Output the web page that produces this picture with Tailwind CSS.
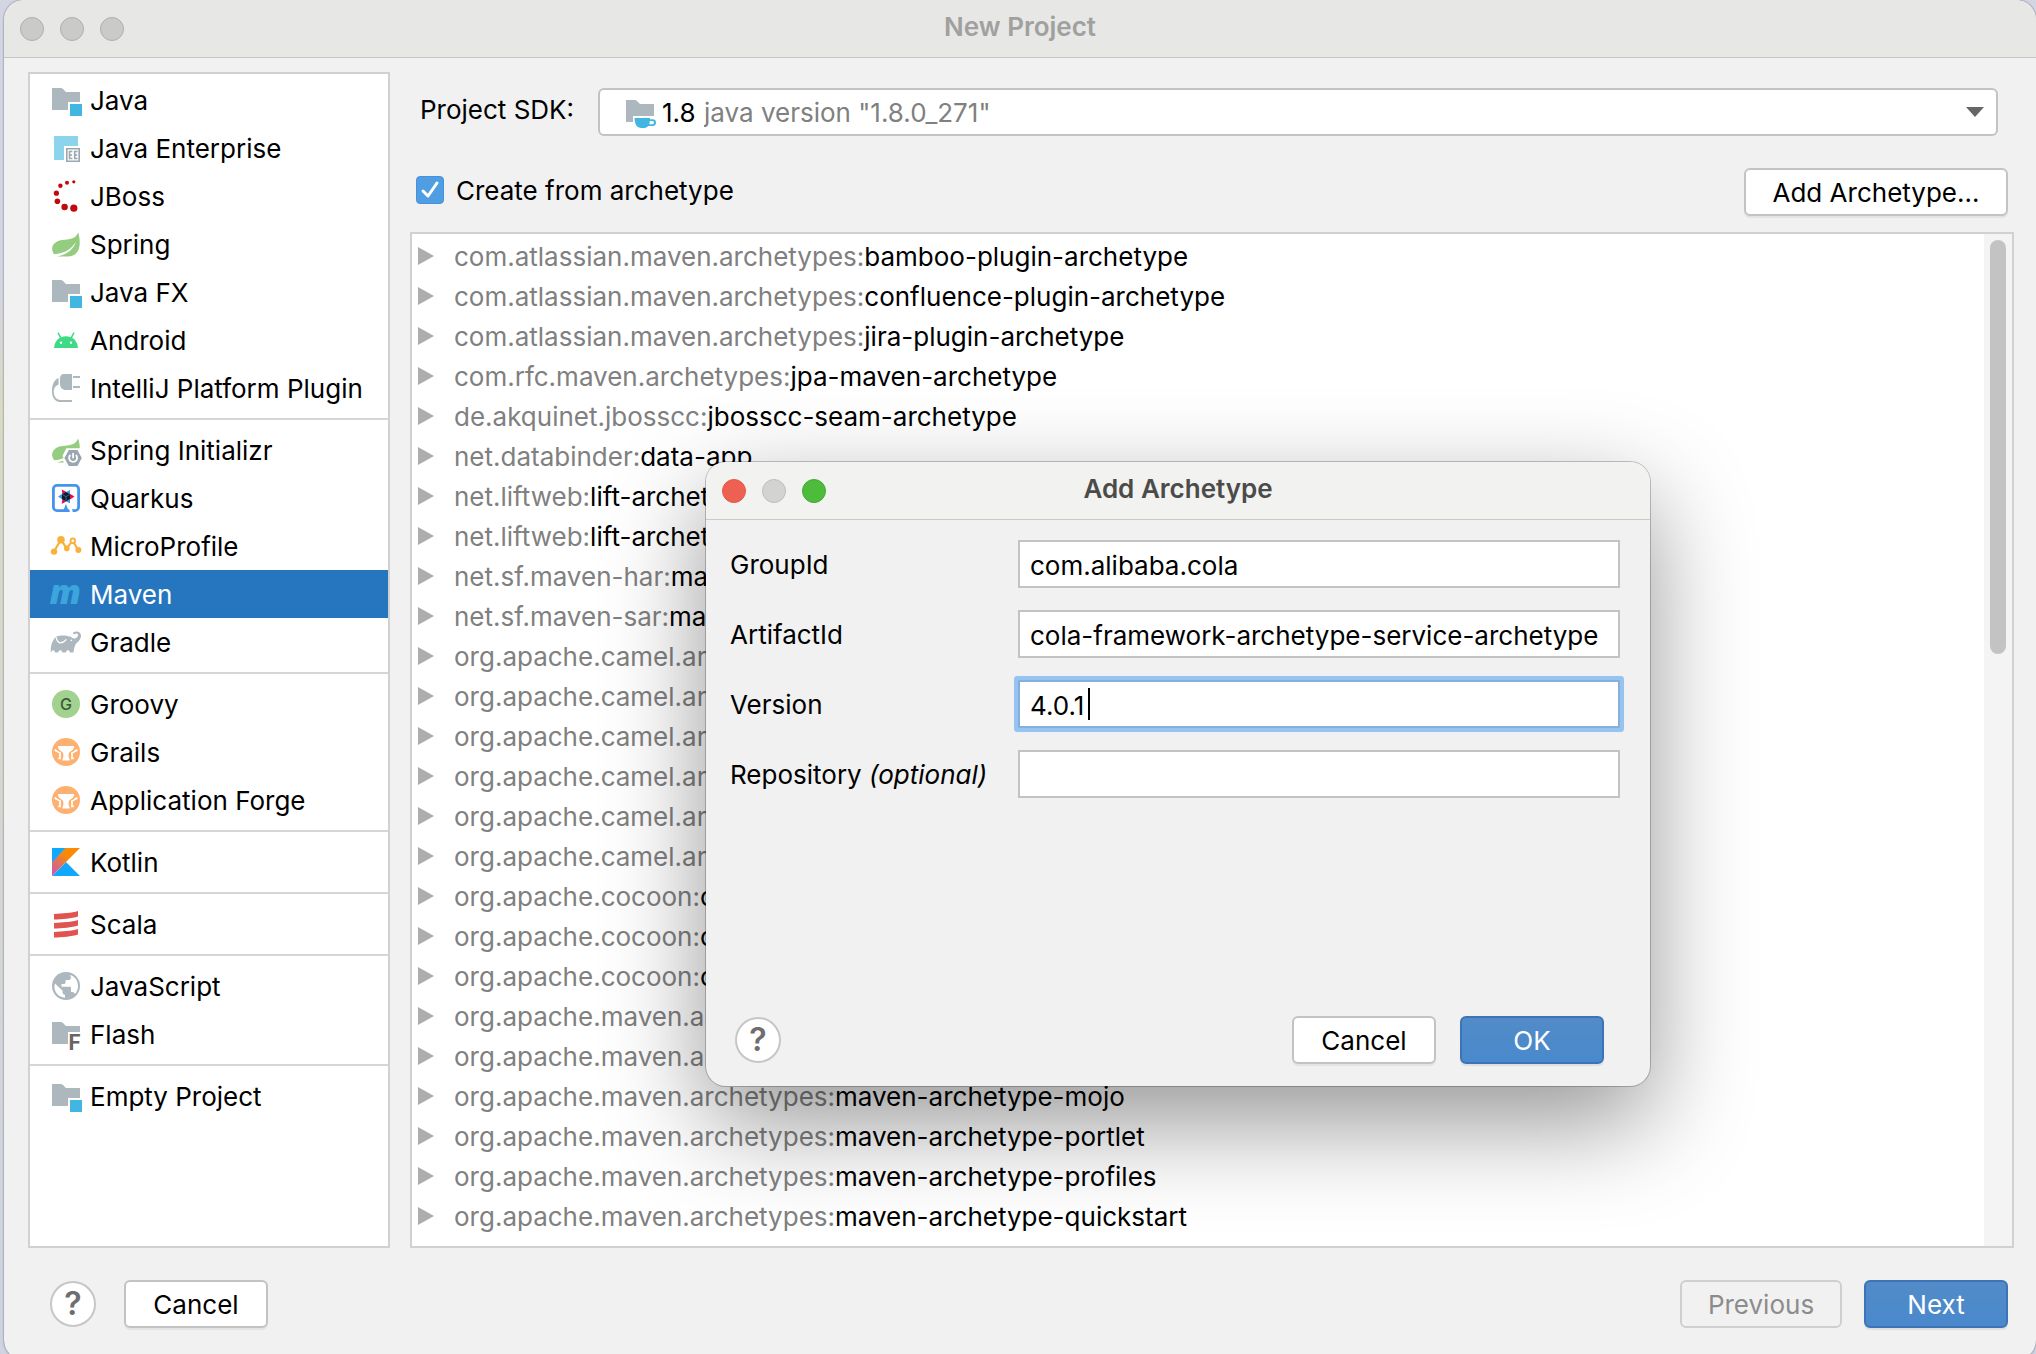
<!DOCTYPE html>
<html lang="en">
<head>
<meta charset="utf-8">
<title>New Project</title>
<script src="https://cdn.jsdelivr.net/npm/@tailwindcss/browser@4"></script>
</head>
<body class="relative flex h-screen overflow-hidden bg-linear-to-b from-[#d3d5e4] from-20% via-[#d9d9c6] via-30% to-[#cfd3e2] pl-1 font-['Inter',sans-serif] text-[26px] leading-8 text-black">

<svg class="absolute size-0" aria-hidden="true">
  <defs>
    <linearGradient id="kotlin-fill" gradientUnits="userSpaceOnUse" x1="1" y1="15" x2="15" y2="1"><stop offset="0" stop-color="#c757bc"/><stop offset=".35" stop-color="#e0705f"/><stop offset=".6" stop-color="#f88909"/><stop offset="1" stop-color="#ff8a00"/></linearGradient>
  </defs>
  <symbol id="folder" viewBox="0 0 16 16"><path fill="#adb7be" d="M1 2h4.400c.5 0 .8.200 1.100.5L8 4h7v5H9v4H1z"/><path fill="#40b6e0" d="M10 10h6v6h-6z"/></symbol>
  <symbol id="enterprise" viewBox="0 0 16 16"><path fill="#8cd3ec" d="M2 2h12v5H7v7H2z"/><path fill="#9aa7b0" d="M8 8h7v7H8z"/><path fill="#fff" d="M8.800 8.800h5.400v5.400H8.800z"/><path fill="none" stroke="#9aa7b0" stroke-width=".8" d="M11.200 9.750H9.750v3.500h1.450M9.750 11.500h1.300M13.800 9.750h-1.450v3.500h1.450M12.350 11.500h1.300"/></symbol>
  <symbol id="jboss" viewBox="0 0 16 16"><g fill="#c4070c"><circle cx="11.900" cy=".9" r=".8"/><circle cx="8.500" cy="1.400" r="1"/><circle cx="5.200" cy="2.900" r="1.100"/><circle cx="3.200" cy="6.600" r="1.300"/><circle cx="3.700" cy="10.600" r="1.400"/><circle cx="7.300" cy="13.500" r="1.600"/><circle cx="11.900" cy="14.100" r="1.800"/></g></symbol>
  <symbol id="spring" viewBox="0 0 16 16"><path fill="#94cc80" d="M14.100 2.300C15.400 6.500 15.800 13.900 9 14.300H3.500C8 13.500 11.500 11 13 7c-2.500 3.700-6 5.800-10.900 6.100C.2 10.800.8 7.500 4.800 6.300 8 5.400 12.300 6.600 14.100 2.300z"/></symbol>
  <symbol id="android" viewBox="0 0 16 16"><path fill="#3ddc84" d="M2 12c.1-2.300 1.200-4.100 2.900-5.100L3.700 4.500l.6-.4 1.400 2.500a6 6 0 0 1 4.600 0l1.400-2.500.6.4-1.200 2.400c1.700 1 2.800 2.800 2.900 5.100z"/><circle cx="5.500" cy="9.400" r=".6" fill="#fff"/><circle cx="10.500" cy="9.400" r=".6" fill="#fff"/></symbol>
  <symbol id="plugin" viewBox="0 0 16 16"><path fill="#adb7be" d="M6.500 1H11v8H7.500C5.800 8.700 5 7.500 5 6V3c.1-1 .6-1.700 1.500-2zM11.500 2H15v1h-3.500zM11.500 7H15v1h-3.500z"/><path fill="#adb7be" d="M4.300 3v3.200C2.300 7 1.900 8.500 1.900 9.700c0 3 1.700 4.300 3.800 4.300H11v1H5.600C2.700 15 1 13.100 1 9.700 1 6 2 4 4.300 3z"/></symbol>
  <symbol id="initializr" viewBox="0 0 16 16"><path fill="#94cc80" d="M14.100 2.300c.5 1.700.8 3.200.8 4.800H8.200l-2 3.900.6 1C5 12.900 3.700 13 2.100 13.100.2 10.800.8 7.500 4.800 6.300 8 5.400 12.300 6.600 14.100 2.300zM3.500 14.300l3-.9.4.9z"/><path fill="#9aa7b0" d="M9.400 8h4.300l2.200 4-2.200 4H9.400l-2.200-4z"/><path fill="none" stroke="#fff" stroke-width=".9" d="M10.200 10.500a2 2 0 1 0 2.700 0M11.550 9.500v2.600"/></symbol>
  <symbol id="quarkus" viewBox="0 0 16 16"><rect x="1.700" y="1.700" width="12.600" height="12.600" rx="1.800" fill="#fff" stroke="#4695eb" stroke-width="1.400"/><path fill="#fff" d="M9.500 13h1.400l.6 2.500H10z"/><path fill="#4695eb" d="M6.300 15 8 11l1.500 4z"/><path fill="#4695eb" d="m6 4 2 1 2-1v2l2 1.300-2 1.300v2L8 9.800l-2 1V8.600L4 7.300 6 6z"/><path fill="#ff004a" d="m5.800 3.700 2.200 1.200L6.500 6zM12.200 7.300 10 6v2.700zM5.800 10.900l.5-2.200L8 9.800z"/><path fill="#141a26" d="m8 5 2 1.100v2.400L8 9.600 6 8.500V6.100z"/><path stroke="#4695eb" stroke-width=".3" fill="none" d="M6.200 6.300 8 7.300l1.800-1M8 7.300v2"/></symbol>
  <symbol id="microprofile" viewBox="0 0 16 16"><path fill="none" stroke="#f9b03d" stroke-width="1.100" d="m2 10.800 3.500-6.100 2.800 4.600 3-4 2.900 4.800"/><g fill="#f9b03d"><circle cx="2" cy="10.800" r="1.600"/><circle cx="5.500" cy="4.900" r="1.900"/><circle cx="8.400" cy="9.200" r="1.400"/><circle cx="11.400" cy="5.400" r="1.600"/><circle cx="14.200" cy="10" r="1.500"/></g><circle cx="11.400" cy="5.400" r=".7" fill="#fff"/></symbol>
  <symbol id="maven" viewBox="0 0 16 16"><text x="-.3" y="13" font-family="Open Sans" font-size="17" font-weight="800" font-style="italic" fill="#3ba5dc">m</text></symbol>
  <symbol id="gradle" viewBox="0 0 16 16"><path fill="#adb7be" d="M.4 13.300C.2 10 1 7.300 3 5.400c2-.9 5-.8 7-.1.800.3 1.300.9 2 1 1 .1 1.900-.7 2-1.500.1-.8-.6-1.200-1.300-.9l-.6.2c-.6 0-.8-.7-.3-1 .9-.6 2.200-.5 3 .2 1.100 1.100.8 2.900-.2 4-.8.9-1.600 1.400-2.100 2.500-.4 1.100-.6 2.300-.8 3.500H10c-.2-.9-.5-1.200-1-1.200s-.9.400-1.100 1.200H6.200c-.2-.8-.5-1.200-1-1.200s-.9.400-1.200 1.200H2.500c-.1-.8-.4-1.200-.9-1.200s-.9.500-1.200 1.200z"/><path fill="none" stroke="#fff" stroke-width=".6" d="M3 5.600c.3 1.500 1 2.600 2 2.800 1.200.1 2.300-.6 3.200-1.700"/><circle cx="10.700" cy="7.200" r=".4" fill="#fff"/></symbol>
  <symbol id="groovy" viewBox="0 0 16 16"><circle cx="8" cy="8" r="7" fill="#a1d28f"/><text x="8" y="10.900" text-anchor="middle" font-family="Inter" font-size="8" font-weight="500" fill="#3c5a33">G</text></symbol>
  <symbol id="grails" viewBox="0 0 16 16"><circle cx="8" cy="8" r="7" fill="#fdb06f"/><path fill="#fff" d="M4 5h8v.9c-.6 1.300-1.600 1.800-2.400 2.300-.5.800-.4 2.400.1 3.300l.2.800H6.100l.2-.8c.5-.9.600-2.500.1-3.300C5.600 7.700 4.600 7.200 4 5.900z"/><path fill="none" stroke="#fff" stroke-width=".9" d="M2.300 7c1 .2 1.500 1.100 2.700 1.500v3M4.100 11.200h1.400M13.700 7c-1 .2-1.500 1.100-2.700 1.500v3M10.500 11.200h1.400"/></symbol>
  <symbol id="kotlin" viewBox="0 0 16 16"><path fill="#0fa8fd" d="M1 1h7L1 8.500zM1 15l7-7 7 7z"/><path fill="url(#kotlin-fill)" d="M7.800 1H15L1 15V8.300z"/></symbol>
  <symbol id="scala" viewBox="0 0 16 16"><path fill="#e0534f" d="M2 3c4-.3 9-.5 12-1.500v2.700C11 5.300 6 5.500 2 5.800zM2 7.500c4-.3 9-.5 12-1.500v2.700c-3 1.100-8 1.300-12 1.600zM2 12c4-.3 9-.5 12-1.500v2.700c-3 1.100-8 1.300-12 1.600z"/></symbol>
  <symbol id="globe" viewBox="0 0 16 16"><circle cx="8" cy="8" r="7" fill="#adb7be"/><path fill="#fff" d="M2.500 6.700 6.300 10.400v.7c0 .8.600 1.300 1.200 1.300v1.500C4.300 13.600 2 11 2.200 8zM9.900 2.400A6 6 0 0 1 14 8c0 1.500-.5 2.900-1.500 4-.2-.6-.7-1-1.300-1h-.7V9c0-.4-.3-.6-.6-.6H5.700V7h1.400c.4 0 .7-.3.700-.7V5h1.400c.7 0 1.300-.6 1.300-1.300z"/></symbol>
  <symbol id="flash" viewBox="0 0 16 16"><path fill="#adb7be" d="M1 2h4.400c.5 0 .8.200 1.100.5L8 4h7v3H9v6H1z"/><text x="9.200" y="15.800" font-family="Inter" font-size="10.500" font-weight="700" fill="#6b6265">F</text></symbol>
  <symbol id="jdk" viewBox="0 0 16 16"><path fill="#adb7be" d="M1 2h4.400c.5 0 .8.200 1.100.5L8 4h7v6H4.500v3H1z"/><path fill="#40b6e0" d="M5.300 11H13v.6h1.300a1.700 1.700 0 0 1 0 3.400h-2.200c-.6.700-1.400 1-2.400 1h-1c-2.200 0-3.400-1.700-3.400-5z"/><path fill="#fff" d="M12.900 12.500h1.300a.8.800 0 0 1 0 1.600h-1.500z"/></symbol>
</svg>

<div class="-mb-1.5 flex min-w-0 flex-1 flex-col overflow-hidden rounded-[20px] bg-[#f1f1f1] shadow-[0_0_2px_rgba(0,0,0,0.6)]">
  <header class="flex h-[58px] shrink-0 items-center border-b border-[#c6c6c6] bg-[#e7e7e5] px-4">
    <div class="flex flex-1 gap-4">
      <button aria-label="Close" class="size-6 rounded-full border border-[#aeaeac] bg-[#cacac9]"></button>
      <button aria-label="Minimize" class="size-6 rounded-full border border-[#aeaeac] bg-[#cacac9]"></button>
      <button aria-label="Zoom" class="size-6 rounded-full border border-[#aeaeac] bg-[#cacac9]"></button>
    </div>
    <h1 class="pb-1 font-semibold text-[#a0a09f]">New Project</h1>
    <div class="flex-1"></div>
  </header>

  <div class="flex min-h-0 flex-1 gap-5 pt-3.5 pr-[22px] pl-6">
    <nav id="kinds" aria-label="Project type" class="w-[362px] shrink-0 border-2 border-[#d1d1d1] bg-white pt-0.5"></nav>

    <main class="flex min-w-0 flex-1 flex-col pt-4">
      <div class="flex h-12 items-center pr-4">
        <label for="sdk" class="w-[188px] shrink-0 pb-1 pl-2.5">Project SDK:</label>
        <div class="relative flex-1">
          <select id="sdk" class="block h-12 w-full appearance-none rounded-md border-2 border-[#c3c3c3] bg-white pt-0.5 pl-[104px] text-[#808080]"><option>java version "1.8.0_271"</option></select>
          <div class="pointer-events-none absolute inset-0 flex items-center pr-3.5 pl-[26px]">
            <svg class="size-8" aria-hidden="true"><use href="#jdk"/></svg>
            <span class="flex-1 pt-0.5 pl-1.5">1.8</span>
            <svg class="h-2.5 w-[18px]" viewBox="0 0 18 10" aria-hidden="true"><path fill="#666" d="M0 0h18l-9 10z"/></svg>
          </div>
        </div>
      </div>

      <div class="mt-8 flex h-12 items-center justify-between pr-1.5 pl-1.5">
        <label class="flex items-center gap-3 pb-1">
          <span class="relative flex">
            <input type="checkbox" checked class="size-7 appearance-none rounded-[4px] border border-[#4a8fdc] bg-[#4f9ee3]">
            <svg class="pointer-events-none absolute inset-0 size-7" viewBox="0 0 28 28" fill="none" stroke="#fff" stroke-width="3" stroke-linecap="round" stroke-linejoin="round" aria-hidden="true"><path d="m7 15 5 5 9-13"/></svg>
          </span>
          <span class="pt-0.5">Create from archetype</span>
        </label>
        <button class="h-12 w-[264px] rounded-md border-2 border-[#c3c3c3] bg-white pt-0.5 shadow-[0_2px_1px_rgba(0,0,0,0.06)]">Add Archetype...</button>
      </div>

      <div class="mt-4 flex min-h-0 flex-1 border-2 border-[#d1d1d1] bg-white">
        <ul id="archetypes" role="tree" aria-label="Archetypes" class="min-w-0 flex-1 overflow-hidden pt-0.5"></ul>
        <div class="w-7 shrink-0 bg-[#f4f4f4] px-1.5 pt-1.5"><div class="h-[414px] rounded-full bg-[#c3c3c3]"></div></div>
      </div>
    </main>
  </div>

  <footer class="flex shrink-0 items-center py-8 pr-7 pl-[46px]">
    <button aria-label="Help" class="size-[46px] rounded-full border-2 border-[#c6c6c6] bg-white text-[32px] font-semibold text-[#6e6e6e]">?</button>
    <button class="ml-7 h-12 w-36 rounded-md border-2 border-[#c3c3c3] bg-white pt-0.5 shadow-[0_2px_1px_rgba(0,0,0,0.06)]">Cancel</button>
    <button disabled class="ml-auto h-12 w-[162px] rounded-md border-2 border-[#cfcfcf] pt-0.5 text-[#8c8c8c]">Previous</button>
    <button class="ml-[22px] h-12 w-36 rounded-md border-2 border-[#3d74b5] bg-linear-to-b from-[#528bc8] to-[#4989cc] pt-0.5 text-white shadow-[0_2px_1px_rgba(0,0,0,0.08)]">Next</button>
  </footer>
</div>

<section role="dialog" aria-labelledby="dialog-title" class="absolute top-[462px] left-[706px] flex h-[624px] w-[944px] flex-col overflow-hidden rounded-[20px] bg-[#f1f1f1] shadow-[0_0_0_1px_rgba(0,0,0,0.22),0_36px_100px_rgba(0,0,0,0.42)]">
  <header class="flex h-[58px] shrink-0 items-center border-b border-[#c9c9c8] bg-[#f2f2f0] px-4">
    <div class="flex flex-1 gap-4">
      <button aria-label="Close" class="size-6 rounded-full border border-[#e0584a] bg-[#ee6052]"></button>
      <button aria-label="Minimize" class="size-6 rounded-full border border-[#bdbdbc] bg-[#d3d3d2]"></button>
      <button aria-label="Zoom" class="size-6 rounded-full border border-[#42a932] bg-[#4cbc3a]"></button>
    </div>
    <h2 id="dialog-title" class="pb-1 font-semibold text-[#4b4b4a]">Add Archetype</h2>
    <div class="flex-1"></div>
  </header>
  <form class="flex flex-1 flex-col pt-5 pr-[30px] pb-[22px] pl-6">
    <div class="grid grid-cols-[288px_1fr] items-center gap-y-[22px]">
      <label for="group" class="pt-0.5">GroupId</label>
      <input id="group" value="com.alibaba.cola" class="h-12 w-full border-2 border-[#c3c3c3] bg-white px-2.5 pt-0.5">
      <label for="artifact" class="pt-0.5">ArtifactId</label>
      <input id="artifact" value="cola-framework-archetype-service-archetype" class="h-12 w-full border-2 border-[#c3c3c3] bg-white px-2.5 pt-0.5">
      <label for="version" class="pt-0.5">Version</label>
      <div class="relative">
        <input id="version" value="4.0.1" class="block h-12 w-full rounded-[1px] border-2 border-[#87afda] bg-white px-2.5 pt-0.5 shadow-[0_0_0_4px_#97c3f3] outline-none">
        <span class="pointer-events-none absolute inset-y-2 left-[70px] w-0.5 bg-black" aria-hidden="true"></span>
      </div>
      <label for="repository" class="pt-0.5">Repository <i>(optional)</i></label>
      <input id="repository" class="h-12 w-full border-2 border-[#c3c3c3] bg-white px-2.5 pt-0.5">
    </div>
    <div class="mt-auto flex items-center pr-4 pl-[5px]">
      <button type="button" aria-label="Help" class="size-[46px] rounded-full border-2 border-[#c6c6c6] bg-white text-[32px] font-semibold text-[#6e6e6e]">?</button>
      <button type="button" class="ml-auto h-12 w-36 rounded-md border-2 border-[#c3c3c3] bg-white pt-0.5 shadow-[0_2px_1px_rgba(0,0,0,0.06)]">Cancel</button>
      <button type="button" class="ml-6 h-12 w-36 rounded-md border-2 border-[#3d74b5] bg-linear-to-b from-[#528bc8] to-[#4989cc] pt-0.5 text-white shadow-[0_2px_1px_rgba(0,0,0,0.08)]">OK</button>
    </div>
  </form>
</section>

<script>
  const groups = [
    [['folder', 'Java'], ['enterprise', 'Java Enterprise'], ['jboss', 'JBoss'], ['spring', 'Spring'], ['folder', 'Java FX'], ['android', 'Android'], ['plugin', 'IntelliJ Platform Plugin']],
    [['initializr', 'Spring Initializr'], ['quarkus', 'Quarkus'], ['microprofile', 'MicroProfile'], ['maven', 'Maven'], ['gradle', 'Gradle']],
    [['groovy', 'Groovy'], ['grails', 'Grails'], ['grails', 'Application Forge']],
    [['kotlin', 'Kotlin']],
    [['scala', 'Scala']],
    [['globe', 'JavaScript'], ['flash', 'Flash']],
    [['folder', 'Empty Project']],
  ];
  const selected = 'Maven';
  document.getElementById('kinds').innerHTML = groups.map(items => '<ul>' + items.map(([icon, name]) =>
    `<li><button class="${name === selected ? 'flex h-12 w-full items-center gap-2 bg-[#2675bf] pl-5 text-left whitespace-nowrap text-white' : 'flex h-12 w-full items-center gap-2 pl-5 text-left whitespace-nowrap'}"><svg class="size-8 shrink-0" aria-hidden="true"><use href="#${icon}"/></svg><span class="pt-0.5">${name}</span></button></li>`
  ).join('') + '</ul>').join('<hr class="my-1.5 border-t-2 border-[#d6d6d6]">');

  const archetypes = [
    'com.atlassian.maven.archetypes:bamboo-plugin-archetype',
    'com.atlassian.maven.archetypes:confluence-plugin-archetype',
    'com.atlassian.maven.archetypes:jira-plugin-archetype',
    'com.rfc.maven.archetypes:jpa-maven-archetype',
    'de.akquinet.jbosscc:jbosscc-seam-archetype',
    'net.databinder:data-app',
    'net.liftweb:lift-archetype-basic',
    'net.liftweb:lift-archetype-blank',
    'net.sf.maven-har:maven-archetype-har',
    'net.sf.maven-sar:maven-archetype-sar',
    'org.apache.camel.archetypes:camel-archetype-activemq',
    'org.apache.camel.archetypes:camel-archetype-component',
    'org.apache.camel.archetypes:camel-archetype-java',
    'org.apache.camel.archetypes:camel-archetype-scala',
    'org.apache.camel.archetypes:camel-archetype-spring',
    'org.apache.camel.archetypes:camel-archetype-war',
    'org.apache.cocoon:cocoon-22-archetype-block',
    'org.apache.cocoon:cocoon-22-archetype-block-plain',
    'org.apache.cocoon:cocoon-22-archetype-webapp',
    'org.apache.maven.archetypes:maven-archetype-j2ee-simple',
    'org.apache.maven.archetypes:maven-archetype-marmalade-mojo',
    'org.apache.maven.archetypes:maven-archetype-mojo',
    'org.apache.maven.archetypes:maven-archetype-portlet',
    'org.apache.maven.archetypes:maven-archetype-profiles',
    'org.apache.maven.archetypes:maven-archetype-quickstart',
  ];
  document.getElementById('archetypes').innerHTML = archetypes.map(entry => {
    const [group, artifact] = entry.split(':');
    return `<li role="treeitem" class="flex h-10 items-center pl-1.5 whitespace-nowrap"><svg class="mr-5 h-[18px] w-4 shrink-0" viewBox="0 0 16 18" aria-hidden="true"><path fill="#adadad" d="M0 0l16 9L0 18z"/></svg><span class="pt-0.5"><span class="text-[#808080]">${group}:</span>${artifact}</span></li>`;
  }).join('');
</script>
</body>
</html>
